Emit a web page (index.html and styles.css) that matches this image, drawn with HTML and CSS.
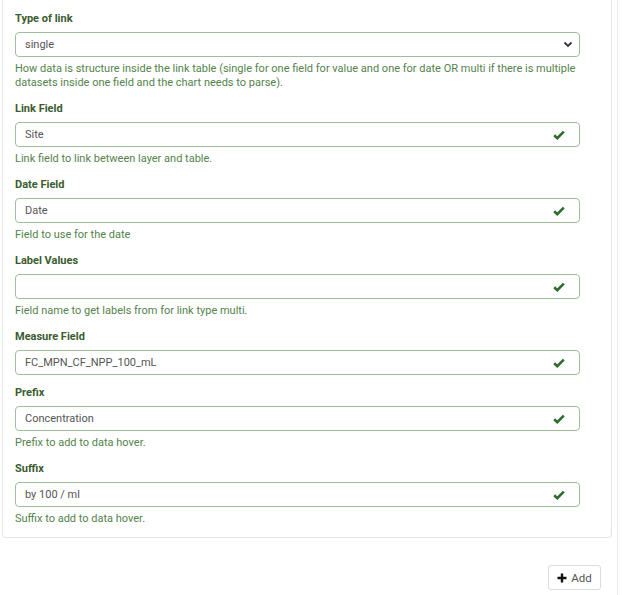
FILE: index.html
```html
<!DOCTYPE html>
<html>
<head>
<meta charset="utf-8">
<link rel="stylesheet" href="styles.css">
</head>
<body>
<div class="page">
  <div class="card">
    <div class="field">
      <label class="label">Type of link</label>
      <div class="control select">
        <span class="value">single</span>
        <svg class="chev" width="10" height="7" viewBox="0 0 10 7"><path d="M1.5 1.5 L5 5 L8.5 1.5" fill="none" stroke="#333" stroke-width="1.8"/></svg>
      </div>
      <div class="help">How data is structure inside the link table (single for one field for value and one for date OR multi if there is multiple datasets inside one field and the chart needs to parse).</div>
    </div>
    <div class="field">
      <label class="label">Link Field</label>
      <div class="control"><span class="value">Site</span><svg class="check" width="12" height="10" viewBox="0 0 12 10"><path d="M1.2 5.2 L4.3 8.2 L10.8 1.6" fill="none" stroke="#2f6b2c" stroke-width="2.6"/></svg></div>
      <div class="help">Link field to link between layer and table.</div>
    </div>
    <div class="field">
      <label class="label">Date Field</label>
      <div class="control"><span class="value">Date</span><svg class="check" width="12" height="10" viewBox="0 0 12 10"><path d="M1.2 5.2 L4.3 8.2 L10.8 1.6" fill="none" stroke="#2f6b2c" stroke-width="2.6"/></svg></div>
      <div class="help">Field to use for the date</div>
    </div>
    <div class="field">
      <label class="label">Label Values</label>
      <div class="control"><span class="value"></span><svg class="check" width="12" height="10" viewBox="0 0 12 10"><path d="M1.2 5.2 L4.3 8.2 L10.8 1.6" fill="none" stroke="#2f6b2c" stroke-width="2.6"/></svg></div>
      <div class="help">Field name to get labels from for link type multi.</div>
    </div>
    <div class="field nohelp">
      <label class="label">Measure Field</label>
      <div class="control"><span class="value">FC_MPN_CF_NPP_100_mL</span><svg class="check" width="12" height="10" viewBox="0 0 12 10"><path d="M1.2 5.2 L4.3 8.2 L10.8 1.6" fill="none" stroke="#2f6b2c" stroke-width="2.6"/></svg></div>
    </div>
    <div class="field">
      <label class="label">Prefix</label>
      <div class="control"><span class="value">Concentration</span><svg class="check" width="12" height="10" viewBox="0 0 12 10"><path d="M1.2 5.2 L4.3 8.2 L10.8 1.6" fill="none" stroke="#2f6b2c" stroke-width="2.6"/></svg></div>
      <div class="help">Prefix to add to data hover.</div>
    </div>
    <div class="field last">
      <label class="label">Suffix</label>
      <div class="control"><span class="value">by 100 / ml</span><svg class="check" width="12" height="10" viewBox="0 0 12 10"><path d="M1.2 5.2 L4.3 8.2 L10.8 1.6" fill="none" stroke="#2f6b2c" stroke-width="2.6"/></svg></div>
      <div class="help">Suffix to add to data hover.</div>
    </div>
  </div>
  <div class="actions">
    <button class="btn"><svg width="10" height="10" viewBox="0 0 10 10"><path d="M5 0.5 V9.5 M0.5 5 H9.5" stroke="#111" stroke-width="2.4"/></svg><span>Add</span></button>
  </div>
</div>
</body>
</html>
```
FILE: styles.css
```css
html, body {
  margin: 0;
  padding: 0;
  background: #fff;
}
body {
  font-family: Roboto, "Liberation Sans", sans-serif;
  height: 595px;
  overflow: hidden;
}
.page {
  width: 618px;
  height: 595px;
  border-right: 1px solid #ebebeb;
  box-sizing: border-box;
}
.card {
  margin-left: 2px;
  width: 610px;
  box-sizing: border-box;
  border: 1px solid #e6e6e6;
  border-top: none;
  border-radius: 0 0 4px 4px;
  padding: 12px 31px 11px 12px;
}
.field {
  display: flex;
  flex-direction: column;
  margin-bottom: 12px;
}
.field.nohelp {
  margin-bottom: 11px;
}
.field.last {
  margin-bottom: 0;
}
.label {
  font-size: 11px;
  line-height: 14px;
  font-weight: 700;
  color: #3a5c2e;
  margin-bottom: 6px;
}
.control {
  height: 25px;
  box-sizing: border-box;
  border: 1.5px solid #9fc09b;
  border-radius: 4px;
  display: flex;
  align-items: center;
  justify-content: space-between;
  padding: 0 14px 0 9px;
  background: #fff;
}
.control.select {
  padding-right: 6px;
}
.value {
  font-size: 11px;
  color: #555;
}
.check {
  display: block;
}
.chev {
  display: block;
}
.help {
  margin-top: 5px;
  font-size: 11px;
  line-height: 14px;
  color: #55824d;
}
.actions {
  display: flex;
  justify-content: flex-end;
  width: 601px;
  margin-top: 27px;
}
.btn {
  display: flex;
  align-items: center;
  gap: 4px;
  height: 25px;
  width: 53px;
  justify-content: center;
  border: 1px solid #dcdcdc;
  border-radius: 3px;
  background: #fff;
  font-family: Roboto, "Liberation Sans", sans-serif;
  font-size: 11.5px;
  color: #555;
  padding: 0;
}
```
